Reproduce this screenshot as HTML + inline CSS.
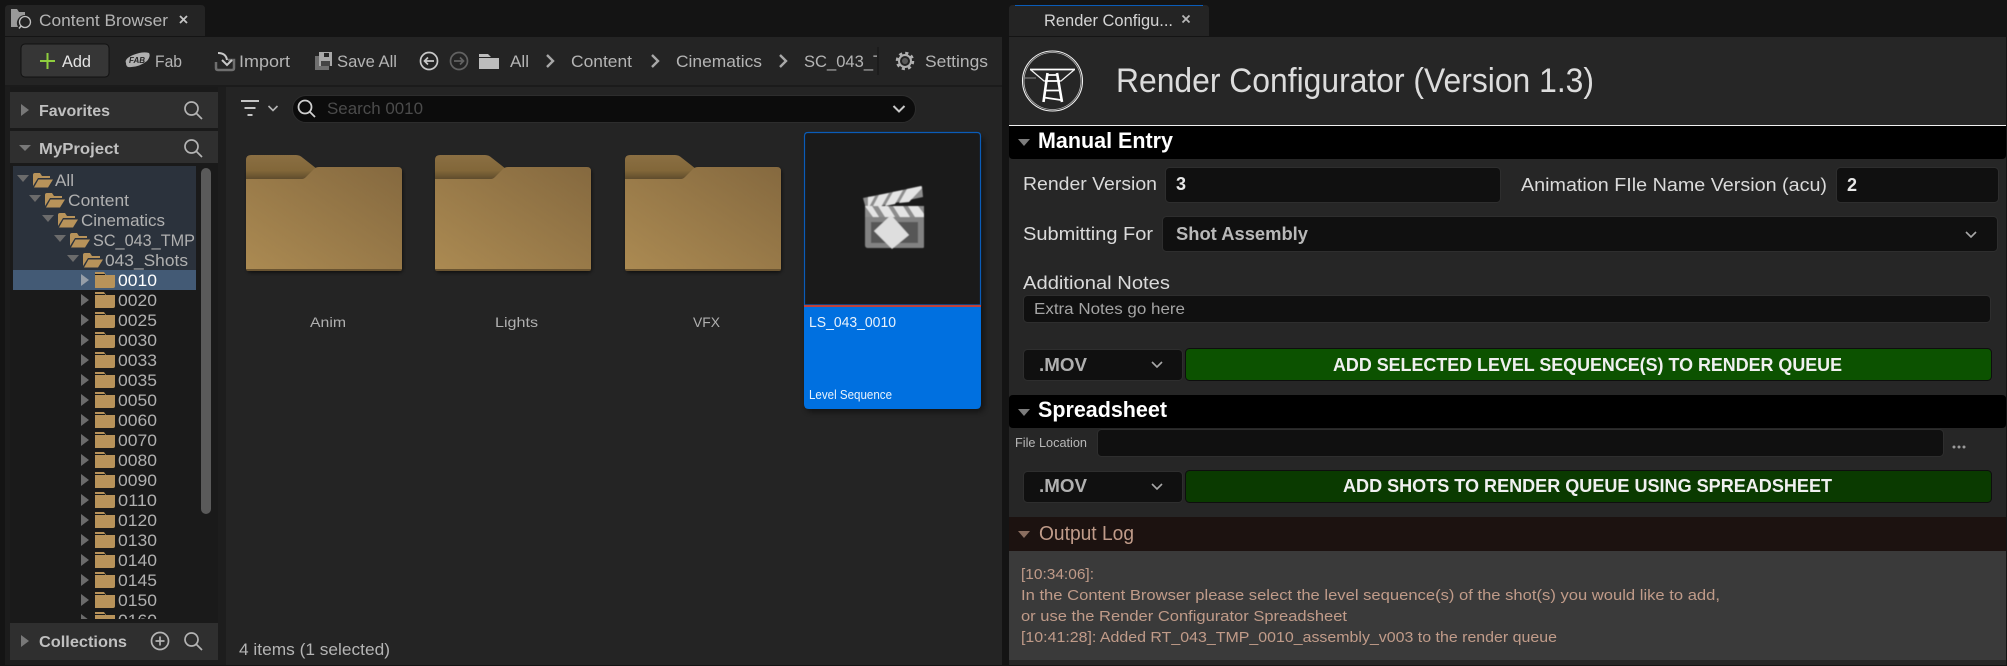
<!DOCTYPE html>
<html><head><meta charset="utf-8">
<style>
html,body{margin:0;padding:0;background:#141414;width:2007px;height:666px;overflow:hidden}
svg{display:block}
text{font-family:"Liberation Sans",sans-serif;white-space:pre}
.t{font-size:16.5px;fill:#b4b4b4}
.tr{font-size:16.5px;fill:#b0b0b0}
.h{font-size:16px;font-weight:bold;fill:#c0c0c0}
.b{font-size:22px;font-weight:bold;fill:#fff}
.l{font-size:18px;fill:#dadada}
.g{font-size:18.5px;font-weight:bold;fill:#f0f0f0}
.m{font-size:18px;font-weight:bold;fill:#b0b0b0}
.o{font-size:15px;fill:#c09b89}
.f{font-size:14px;fill:#b0b0b0}
</style></head><body>
<svg width="2007" height="666" viewBox="0 0 2007 666" xmlns="http://www.w3.org/2000/svg">
<defs>
<linearGradient id="fb" x1="0" y1="0" x2="0" y2="1"><stop offset="0" stop-color="#8b6f43"/><stop offset=".6" stop-color="#826739"/><stop offset="1" stop-color="#57462a"/></linearGradient>
<linearGradient id="ff" x1="0" y1="1" x2="1" y2="0"><stop offset="0" stop-color="#ab8a52"/><stop offset="1" stop-color="#85693f"/></linearGradient>
<g id="bf">
<rect x="1" y="14" width="156" height="104" rx="4" fill="#000" opacity=".5" filter="url(#sh2)"/>
<path d="M0 26V5Q0 0 5 0H50Q54 0 57 3L71 14V26Z" fill="url(#fb)"/>
<rect x="0" y="108" width="156" height="8" rx="2" fill="#6a5431"/>
<path d="M0 24H56Q58 24 60 22L68 14Q70 12 73 12H152Q156 12 156 16V114H0Z" fill="url(#ff)"/>
</g>
<g id="sf"><path d="M0 -8H9L11 -5H20V6Q20 8 18 8H0Z" fill="#b8935a"/><rect x="0" y="-6" width="10" height="1" fill="#1a1a1a"/></g>
<g id="of"><path d="M0 14V2Q0 0 2 0H7L9 3H17V5H5L0 13Z" fill="#b8935a"/><path d="M5.5 6.5H20L15 14.500H1Z" fill="#b8935a"/></g>
<path id="ar" d="M0 -6L8 0L0 6Z" fill="#6b6b6b"/>
<path id="da" d="M0 0H12L6 7Z" fill="#6b6b6b"/>
<g id="sr" fill="none" stroke="#b4b4b4" stroke-width="1.700"><circle cx="-1.500" cy="-1.500" r="6.500"/><path d="M3 3L9 9"/></g>
<path id="cv" d="M-5 -3L0 2L5 -3" fill="none" stroke="#a8a8a8" stroke-width="1.600"/>
<path id="cr" d="M-3 -6L3 0L-3 6" fill="none" stroke="#a8a8a8" stroke-width="2.400"/>
<filter id="sh" x="-10%" y="-10%" width="120%" height="120%"><feGaussianBlur stdDeviation="3"/></filter>
<filter id="sh2" x="-10%" y="-10%" width="120%" height="120%"><feGaussianBlur stdDeviation="1.500"/></filter>
<filter id="bl" x="-10%" y="-10%" width="120%" height="120%"><feGaussianBlur stdDeviation=".5"/></filter>
<clipPath id="tc"><rect x="10" y="164" width="190" height="455"/></clipPath>
<clipPath id="bc"><rect x="800" y="40" width="78" height="40"/></clipPath>
</defs>

<rect width="2007" height="666" fill="#141414"/>

<!-- LEFT PANEL -->
<path d="M5 36V9Q5 5 9 5H201Q205 5 205 9V36Z" fill="#242424"/>
<path d="M11 9H17L19 12H25V15A8 8 0 0 0 18 27H11Z" fill="#9a9a9a"/>
<circle cx="25" cy="22" r="5.500" fill="none" stroke="#c0c0c0" stroke-width="1.300"/><path d="M21 26L19 28.500" stroke="#c0c0c0" stroke-width="1.500"/>
<text x="39" y="26" class="t" textLength="129" lengthAdjust="spacingAndGlyphs">Content Browser</text>
<path d="M180 16L187 23M187 16L180 23" stroke="#c4c4c4" stroke-width="1.800"/>
<rect x="5" y="37" width="997" height="48" fill="#242424"/>
<rect x="5" y="85" width="997" height="2" fill="#1b1b1b"/>
<rect x="21" y="44" width="88" height="33" rx="4" fill="#363636" stroke="#111" stroke-width="1"/>
<path d="M47.500 53V69M40 61H55" stroke="#8fcf3e" stroke-width="2"/>
<text x="62" y="67" class="t" style="fill:#e4e4e4" textLength="29" lengthAdjust="spacingAndGlyphs">Add</text>
<path d="M126 63Q124 59 133 55Q143 51 149 53Q151 56 147 61Q138 68 128 67Q126 66 126 63Z" fill="#b0b0b0"/>
<text x="129" y="63" style="font-size:8px;font-weight:bold;font-style:italic;fill:#242424">FAB</text>
<text x="155" y="67" class="t" textLength="27" lengthAdjust="spacingAndGlyphs">Fab</text>
<path d="M216 62V68Q216 70 218 70H232Q234 70 234 68V60H228" fill="none" stroke="#6f6f6f" stroke-width="2.500"/>
<path d="M218 53Q226 53 227 60M222 60L227 65L232 60" fill="none" stroke="#c8c8c8" stroke-width="2"/>
<text x="239" y="67" class="t" textLength="51" lengthAdjust="spacingAndGlyphs">Import</text>
<rect x="315" y="56" width="14" height="14" fill="#6f6f6f"/><path d="M319 52H332V66H319Z" fill="#a8a8a8"/><rect x="324" y="53" width="5" height="4" fill="#242424"/><rect x="321" y="61" width="9" height="5" fill="#444"/>
<text x="337" y="67" class="t" textLength="60" lengthAdjust="spacingAndGlyphs">Save All</text>
<circle cx="429" cy="61" r="8.500" fill="none" stroke="#c8c8c8" stroke-width="1.700"/><path d="M434 61H425M428 57.500L424.500 61L428 64.500" fill="none" stroke="#c8c8c8" stroke-width="1.700"/>
<circle cx="459" cy="61" r="8.500" fill="none" stroke="#626262" stroke-width="1.700"/><path d="M454 61H463M460 57.500L463.500 61L460 64.500" fill="none" stroke="#626262" stroke-width="1.700"/>
<path d="M479 54H488L491 57H499V69H479Z" fill="#bdbdbd"/><rect x="479" y="57" width="20" height="1" fill="#242424"/>
<text x="510" y="67" class="t" textLength="19" lengthAdjust="spacingAndGlyphs">All</text>
<use href="#cr" x="550" y="61"/>
<text x="571" y="67" class="t" textLength="61" lengthAdjust="spacingAndGlyphs">Content</text>
<use href="#cr" x="655" y="61"/>
<text x="676" y="67" class="t" textLength="86" lengthAdjust="spacingAndGlyphs">Cinematics</text>
<use href="#cr" x="783" y="61"/>
<g clip-path="url(#bc)"><text x="804" y="67" class="t" textLength="104" lengthAdjust="spacingAndGlyphs">SC_043_TMP</text></g>
<rect x="877" y="47" width="2" height="28" fill="#1c1c1c"/>
<circle cx="905" cy="61" r="6" fill="none" stroke="#b0b0b0" stroke-width="2"/>
<circle cx="905" cy="61" r="8" fill="none" stroke="#b0b0b0" stroke-width="2.500" stroke-dasharray="3.140 3.140"/>
<circle cx="905" cy="61" r="3" fill="#5a5a5a"/>
<text x="925" y="67" class="t" textLength="63" lengthAdjust="spacingAndGlyphs">Settings</text>

<!-- Sidebar -->
<rect x="5" y="87" width="5" height="578" fill="#1c1c1c"/>
<rect x="10" y="87" width="208" height="578" fill="#1a1a1a"/>
<rect x="218" y="87" width="8" height="578" fill="#1d1d1d"/>
<rect x="10" y="660" width="216" height="5" fill="#1d1d1d"/>
<rect x="10" y="92" width="208" height="36" fill="#2f2f2f"/>
<rect x="10" y="131" width="208" height="32" fill="#2f2f2f"/>
<path d="M21 104L29 110L21 116Z" fill="#787878"/>
<path d="M19 145H31L25 151Z" fill="#787878"/>
<text x="39" y="116" class="h" textLength="71" lengthAdjust="spacingAndGlyphs">Favorites</text>
<text x="39" y="154" class="h" textLength="80" lengthAdjust="spacingAndGlyphs">MyProject</text>
<use href="#sr" x="193" y="110"/><use href="#sr" x="193" y="148"/>

<rect x="13" y="166" width="183" height="104" fill="#2b323c"/>
<rect x="13" y="270" width="183" height="20" fill="#435a75"/>
<rect x="201" y="168" width="10" height="346" rx="5" fill="#5a5a5a"/>

<g clip-path="url(#tc)">
<use href="#da" x="17" y="175"/><use href="#of" x="33" y="173"/><text x="55" y="186" class="tr" textLength="19" lengthAdjust="spacingAndGlyphs">All</text>
<use href="#da" x="29" y="195"/><use href="#of" x="45" y="193"/><text x="68" y="206" class="tr" textLength="61" lengthAdjust="spacingAndGlyphs">Content</text>
<use href="#da" x="42" y="215"/><use href="#of" x="58" y="213"/><text x="81" y="226" class="tr" textLength="84" lengthAdjust="spacingAndGlyphs">Cinematics</text>
<use href="#da" x="54" y="235"/><use href="#of" x="70" y="233"/><text x="93" y="246" class="tr" textLength="102" lengthAdjust="spacingAndGlyphs">SC_043_TMP</text>
<use href="#da" x="67" y="255"/><use href="#of" x="83" y="253"/><text x="105" y="266" class="tr" textLength="83" lengthAdjust="spacingAndGlyphs">043_Shots</text>

<path d="M81 274L89 280L81 286Z" fill="#969ea8"/><use href="#sf" x="95" y="280"/><text x="118" y="286" class="tr" style="fill:#fff" textLength="39" lengthAdjust="spacingAndGlyphs">0010</text>
<use href="#ar" x="81" y="300"/><use href="#sf" x="95" y="300"/><text x="118" y="306" class="tr" textLength="39" lengthAdjust="spacingAndGlyphs">0020</text>
<use href="#ar" x="81" y="320"/><use href="#sf" x="95" y="320"/><text x="118" y="326" class="tr" textLength="39" lengthAdjust="spacingAndGlyphs">0025</text>
<use href="#ar" x="81" y="340"/><use href="#sf" x="95" y="340"/><text x="118" y="346" class="tr" textLength="39" lengthAdjust="spacingAndGlyphs">0030</text>
<use href="#ar" x="81" y="360"/><use href="#sf" x="95" y="360"/><text x="118" y="366" class="tr" textLength="39" lengthAdjust="spacingAndGlyphs">0033</text>
<use href="#ar" x="81" y="380"/><use href="#sf" x="95" y="380"/><text x="118" y="386" class="tr" textLength="39" lengthAdjust="spacingAndGlyphs">0035</text>
<use href="#ar" x="81" y="400"/><use href="#sf" x="95" y="400"/><text x="118" y="406" class="tr" textLength="39" lengthAdjust="spacingAndGlyphs">0050</text>
<use href="#ar" x="81" y="420"/><use href="#sf" x="95" y="420"/><text x="118" y="426" class="tr" textLength="39" lengthAdjust="spacingAndGlyphs">0060</text>
<use href="#ar" x="81" y="440"/><use href="#sf" x="95" y="440"/><text x="118" y="446" class="tr" textLength="39" lengthAdjust="spacingAndGlyphs">0070</text>
<use href="#ar" x="81" y="460"/><use href="#sf" x="95" y="460"/><text x="118" y="466" class="tr" textLength="39" lengthAdjust="spacingAndGlyphs">0080</text>
<use href="#ar" x="81" y="480"/><use href="#sf" x="95" y="480"/><text x="118" y="486" class="tr" textLength="39" lengthAdjust="spacingAndGlyphs">0090</text>
<use href="#ar" x="81" y="500"/><use href="#sf" x="95" y="500"/><text x="118" y="506" class="tr" textLength="39" lengthAdjust="spacingAndGlyphs">0110</text>
<use href="#ar" x="81" y="520"/><use href="#sf" x="95" y="520"/><text x="118" y="526" class="tr" textLength="39" lengthAdjust="spacingAndGlyphs">0120</text>
<use href="#ar" x="81" y="540"/><use href="#sf" x="95" y="540"/><text x="118" y="546" class="tr" textLength="39" lengthAdjust="spacingAndGlyphs">0130</text>
<use href="#ar" x="81" y="560"/><use href="#sf" x="95" y="560"/><text x="118" y="566" class="tr" textLength="39" lengthAdjust="spacingAndGlyphs">0140</text>
<use href="#ar" x="81" y="580"/><use href="#sf" x="95" y="580"/><text x="118" y="586" class="tr" textLength="39" lengthAdjust="spacingAndGlyphs">0145</text>
<use href="#ar" x="81" y="600"/><use href="#sf" x="95" y="600"/><text x="118" y="606" class="tr" textLength="39" lengthAdjust="spacingAndGlyphs">0150</text>
<use href="#ar" x="81" y="620"/><use href="#sf" x="95" y="620"/><text x="118" y="626" class="tr" textLength="39" lengthAdjust="spacingAndGlyphs">0160</text>
</g>

<rect x="10" y="623" width="208" height="37" fill="#2f2f2f"/>
<path d="M21 635L29 641L21 647Z" fill="#787878"/>
<text x="39" y="647" class="h" textLength="88" lengthAdjust="spacingAndGlyphs">Collections</text>
<circle cx="160" cy="641" r="8.500" fill="none" stroke="#b4b4b4" stroke-width="1.700"/><path d="M160 636.500V645.500M155.500 641H164.500" stroke="#b4b4b4" stroke-width="1.700"/>
<use href="#sr" x="193" y="641"/>

<!-- Main area -->
<rect x="226" y="87" width="776" height="578" fill="#242424"/>
<path d="M241 101H259M244.500 108H255.500M247.500 115H252.500" stroke="#c4c4c4" stroke-width="2"/>
<path d="M268.500 106L273 110.500L277.500 106" fill="none" stroke="#b4b4b4" stroke-width="1.600"/>
<rect x="292.500" y="95.500" width="623" height="27" rx="13.500" fill="#0c0c0c" stroke="#2d2d2d"/>
<circle cx="305" cy="107" r="6.500" fill="none" stroke="#d0d0d0" stroke-width="1.800"/><path d="M309.500 111.500L315 117" stroke="#d0d0d0" stroke-width="1.800"/>
<text x="327" y="114" class="t" style="fill:#4b4b4b" textLength="96" lengthAdjust="spacingAndGlyphs">Search 0010</text>
<path d="M893.500 106L899 111.500L904.500 106" fill="none" stroke="#c8c8c8" stroke-width="2"/>

<use href="#bf" x="246" y="155"/>
<use href="#bf" x="435" y="155"/>
<use href="#bf" x="625" y="155"/>
<text x="310" y="327" class="f" textLength="36" lengthAdjust="spacingAndGlyphs">Anim</text>
<text x="495" y="327" class="f" textLength="43" lengthAdjust="spacingAndGlyphs">Lights</text>
<text x="693" y="327" class="f" textLength="27" lengthAdjust="spacingAndGlyphs">VFX</text>

<!-- Card -->
<rect x="806" y="136" width="178" height="276" rx="5" fill="#000" opacity=".45" filter="url(#sh)"/>
<path d="M804.500 305V136Q804.500 132.500 808 132.500H977Q980.500 132.500 980.500 136V305Z" fill="#1a1a1a" stroke="#0a5cb8" stroke-width="1.200"/>
<path d="M804 307H981V404Q981 409 976 409H809Q804 409 804 404Z" fill="#0070e0"/>
<rect x="804" y="305" width="177" height="2" fill="#c0413b"/>
<g filter="url(#bl)">
<path d="M863 198L922 186L923 197L866 209Z" fill="#8d8d8d"/>
<path d="M868 197L875 196L868 209ZM879 195L889 193L881 207L872 208ZM893 192L903 190L895 204L885 206ZM907 189L921 186L922 188L909 202L899 203Z" fill="#e4e4e4"/>
<path d="M865 206H924V217H865Z" fill="#8d8d8d"/>
<path d="M865 206H872L879 217H873ZM878 206H888L895 217H885ZM893 206H903L910 217H900ZM908 206H918L924 214V217H915Z" fill="#e4e4e4"/>
<path d="M865 217H924V247Q924 248 922 248H868Q865 248 865 245Z" fill="#828282"/>
<rect x="871" y="222" width="47" height="21" fill="#565656"/>
<path d="M891 215L909 235L892 249L874 231Z" fill="#dedede"/>
</g>
<text x="809" y="327" style="font-size:14.500px;fill:#e8f2fc" textLength="87" lengthAdjust="spacingAndGlyphs">LS_043_0010</text>
<text x="809" y="399" style="font-size:12.500px;fill:#e8f2fc" textLength="83" lengthAdjust="spacingAndGlyphs">Level Sequence</text>

<text x="239" y="655" class="t" textLength="151" lengthAdjust="spacingAndGlyphs">4 items (1 selected)</text>

<!-- RIGHT PANEL -->
<path d="M1009 36V9Q1009 5 1013 5H1205Q1209 5 1209 9V36Z" fill="#242424"/>
<rect x="1015" y="5" width="188" height="1" fill="#0a5cb8"/>
<text x="1044" y="26" class="t" style="fill:#d4d4d4" textLength="129" lengthAdjust="spacingAndGlyphs">Render Configu...</text>
<path d="M1182.500 15.500L1189.500 22.500M1189.500 15.500L1182.500 22.500" stroke="#b8b8b8" stroke-width="1.800"/>

<rect x="1009" y="37" width="997" height="628" fill="#262626"/>
<!-- Logo -->
<circle cx="1052.500" cy="81" r="30" fill="none" stroke="#f0f0f0" stroke-width="1.100"/>
<circle cx="1052.500" cy="81" r="28.500" fill="none" stroke="#bcbcbc" stroke-width=".8"/>
<path d="M1030 69.500H1075" fill="none" stroke="#fff" stroke-width="1.800"/>
<path d="M1031 70L1044 81H1061L1074 70" fill="none" stroke="#f0f0f0" stroke-width="1.300"/>
<path d="M1047.500 73L1043.500 102M1057 73L1062 102" fill="none" stroke="#fff" stroke-width="2.600"/>
<path d="M1045 81H1060M1045 90.500H1061M1044 97.500L1061 100M1047 75H1057" fill="none" stroke="#fff" stroke-width="1.800"/>
<path d="M1024 78H1036" stroke="#888" stroke-width="1"/>
<text x="1116" y="92" style="font-size:34px;fill:#dcdcdc" textLength="478" lengthAdjust="spacingAndGlyphs">Render Configurator (Version 1.3)</text>
<rect x="1009" y="125" width="997" height="1" fill="#f0f0f0"/>

<!-- Manual Entry -->
<path d="M1009 126H2006V155Q2006 159 2002 159H1013Q1009 159 1009 155Z" fill="#000"/>
<path d="M1018 139H1030L1024 146Z" fill="#7c7c7c"/>
<text x="1038" y="148" class="b" textLength="135" lengthAdjust="spacingAndGlyphs">Manual Entry</text>
<text x="1023" y="190" class="l" textLength="134" lengthAdjust="spacingAndGlyphs">Render Version</text>
<rect x="1165.500" y="167.500" width="335" height="35" rx="4" fill="#101010" stroke="#2e2e2e"/>
<text x="1176" y="190" style="font-size:18px;font-weight:bold;fill:#e8e8e8">3</text>
<text x="1521" y="191" class="l" textLength="306" lengthAdjust="spacingAndGlyphs">Animation FIle Name Version (acu)</text>
<rect x="1836.500" y="167.500" width="162" height="35" rx="4" fill="#101010" stroke="#2e2e2e"/>
<text x="1847" y="191" style="font-size:18px;font-weight:bold;fill:#e8e8e8">2</text>
<text x="1023" y="240" class="l" textLength="130" lengthAdjust="spacingAndGlyphs">Submitting For</text>
<rect x="1162.500" y="216.500" width="835" height="35" rx="4" fill="#101010" stroke="#2e2e2e"/>
<text x="1176" y="240" class="m" style="fill:#b8b8b8" textLength="132" lengthAdjust="spacingAndGlyphs">Shot Assembly</text>
<use href="#cv" x="1971" y="235"/>
<text x="1023" y="289" class="l" textLength="147" lengthAdjust="spacingAndGlyphs">Additional Notes</text>
<rect x="1023.500" y="295.500" width="967" height="27" rx="4" fill="#101010" stroke="#2e2e2e"/>
<text x="1034" y="314" class="t" style="fill:#a4a4a4;font-size:16px" textLength="151" lengthAdjust="spacingAndGlyphs">Extra Notes go here</text>
<rect x="1023.500" y="349.500" width="159" height="31" rx="4" fill="#101010" stroke="#2e2e2e"/>
<text x="1039" y="371" class="m" textLength="48" lengthAdjust="spacingAndGlyphs">.MOV</text>
<use href="#cv" x="1157" y="365"/>
<rect x="1185.500" y="348.500" width="806" height="32" rx="4" fill="#0c5200" stroke="#0e0e0e"/>
<text x="1333" y="371" class="g" textLength="509" lengthAdjust="spacingAndGlyphs">ADD SELECTED LEVEL SEQUENCE(S) TO RENDER QUEUE</text>

<!-- Spreadsheet -->
<path d="M1009 399Q1009 395 1013 395H2002Q2006 395 2006 399V424Q2006 428 2002 428H1013Q1009 428 1009 424Z" fill="#000"/>
<path d="M1018 409H1030L1024 416Z" fill="#7c7c7c"/>
<text x="1038" y="417" class="b" textLength="129" lengthAdjust="spacingAndGlyphs">Spreadsheet</text>
<text x="1015" y="447" style="font-size:12.500px;fill:#b8b8b8" textLength="72" lengthAdjust="spacingAndGlyphs">File Location</text>
<rect x="1097.500" y="429.500" width="846" height="27" rx="4" fill="#101010" stroke="#2e2e2e"/>
<circle cx="1954" cy="447" r="1.500" fill="#9a9a9a"/><circle cx="1959" cy="447" r="1.500" fill="#9a9a9a"/><circle cx="1964" cy="447" r="1.500" fill="#9a9a9a"/>
<rect x="1023.500" y="471.500" width="159" height="31" rx="4" fill="#101010" stroke="#2e2e2e"/>
<text x="1039" y="492" class="m" textLength="48" lengthAdjust="spacingAndGlyphs">.MOV</text>
<use href="#cv" x="1157" y="487"/>
<rect x="1185.500" y="470.500" width="806" height="32" rx="4" fill="#0a3a00" stroke="#0e0e0e"/>
<text x="1343" y="492" class="g" textLength="489" lengthAdjust="spacingAndGlyphs">ADD SHOTS TO RENDER QUEUE USING SPREADSHEET</text>

<!-- Output Log -->
<rect x="1009" y="517" width="997" height="34" fill="#1c1210"/>
<path d="M1018 531H1030L1024 538Z" fill="#8a6e60"/>
<text x="1039" y="540" style="font-size:20px;fill:#c09b89" textLength="95" lengthAdjust="spacingAndGlyphs">Output Log</text>
<rect x="1009" y="551" width="997" height="109" fill="#3a3a3a"/>
<text x="1021" y="579" class="o" textLength="73" lengthAdjust="spacingAndGlyphs">[10:34:06]:</text>
<text x="1021" y="600" class="o" textLength="699" lengthAdjust="spacingAndGlyphs">In the Content Browser please select the level sequence(s) of the shot(s) you would like to add,</text>
<text x="1021" y="621" class="o" textLength="326" lengthAdjust="spacingAndGlyphs">or use the Render Configurator Spreadsheet</text>
<text x="1021" y="642" class="o" textLength="536" lengthAdjust="spacingAndGlyphs">[10:41:28]: Added RT_043_TMP_0010_assembly_v003 to the render queue</text>
</svg>
</body></html>
